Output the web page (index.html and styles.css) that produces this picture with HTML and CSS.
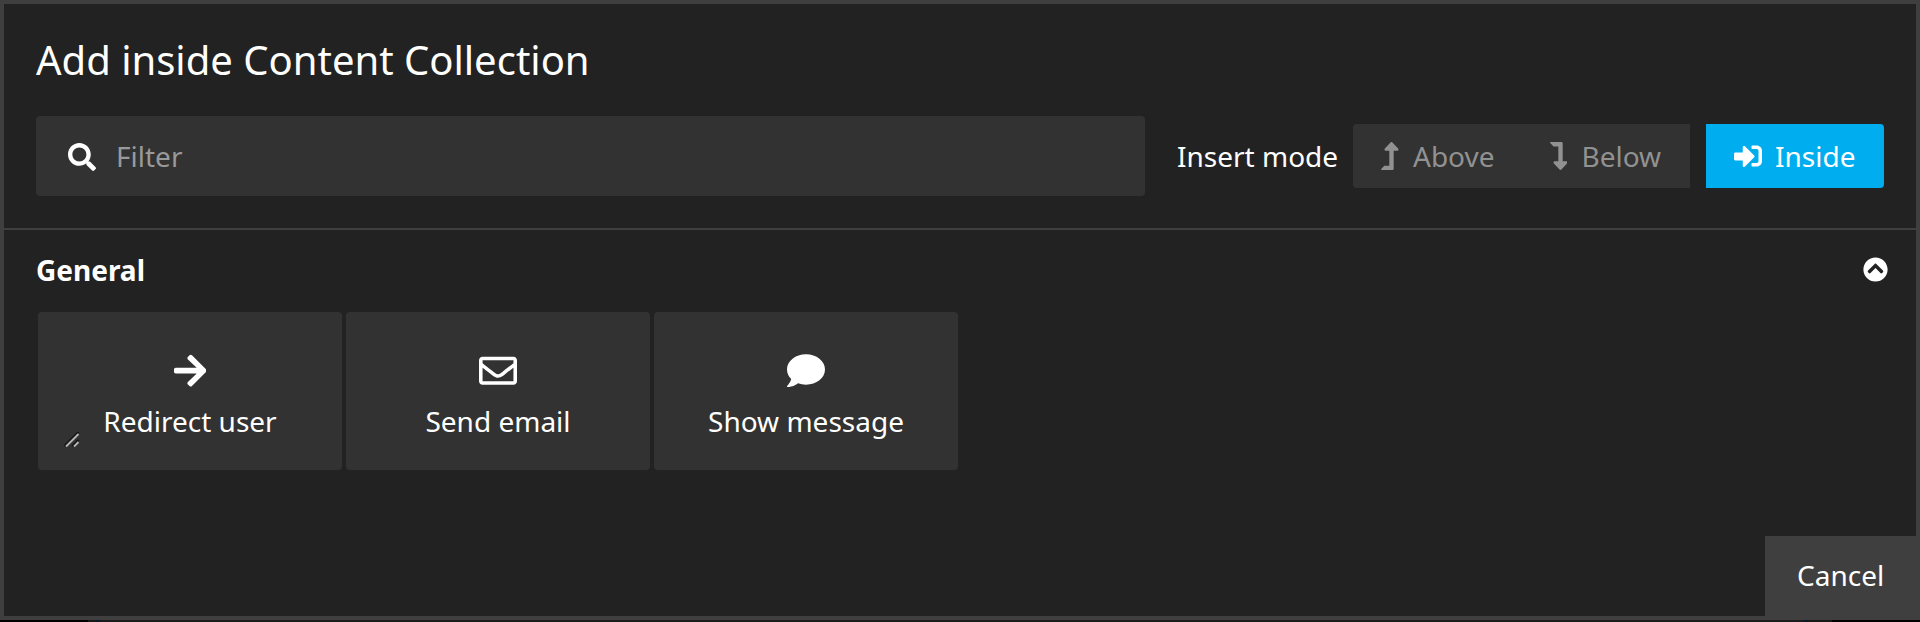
FILE: index.html
```html
<!DOCTYPE html>
<html lang="en">
<head>
<meta charset="utf-8">
<title>Add inside Content Collection</title>
<link rel="stylesheet" href="styles.css">
</head>
<body>
<main class="dialog">
  <header class="head">
    <h1 class="title">Add inside Content Collection</h1>
    <div class="tools">
      <label class="filter">
        <svg class="icon" width="28" height="28" viewBox="0 0 512 512"><path d="M505 442.700L405.300 343c-4.500-4.500-10.600-7-17-7H372c27.600-35.300 44-79.700 44-128C416 93.100 322.900 0 208 0S0 93.100 0 208s93.100 208 208 208c48.300 0 92.700-16.400 128-44v16.300c0 6.400 2.500 12.500 7 17l99.700 99.700c9.400 9.400 24.600 9.400 33.900 0l28.300-28.300c9.400-9.400 9.400-24.600.1-34zM208 336c-70.700 0-128-57.200-128-128 0-70.700 57.200-128 128-128 70.700 0 128 57.200 128 128 0 70.700-57.200 128-128 128z"/></svg>
        <input class="filter-input" type="text" placeholder="Filter">
      </label>
      <span class="mode-label">Insert mode</span>
      <div class="modes">
        <button class="mode mode-first"><svg class="icon" width="17.500" height="28" viewBox="0 0 320 512"><path d="M313.553 119.669L209.587 7.666c-9.485-10.214-25.676-10.229-35.174 0L70.438 119.669C56.232 134.969 67.062 160 88.025 160H152v272H68.024a11.996 11.996 0 0 0-8.485 3.515l-56 56C-4.021 499.074 1.333 512 12.024 512H208c13.255 0 24-10.745 24-24V160h63.966c20.878 0 31.851-24.969 17.587-40.331z"/></svg><span>Above</span></button>
        <button class="mode"><svg class="icon" width="17.500" height="28" viewBox="0 0 320 512"><path d="M313.553 392.331L209.587 504.334c-9.485 10.214-25.676 10.229-35.174 0L70.438 392.331C56.232 377.031 67.062 352 88.025 352H152V80H68.024a11.996 11.996 0 0 1-8.485-3.515l-56-56C-4.021 12.926 1.333 0 12.024 0H208c13.255 0 24 10.745 24 24v328h63.966c20.878 0 31.851 24.969 17.587 40.331z"/></svg><span>Below</span></button>
        <button class="mode mode-active"><svg class="icon" width="28" height="28" viewBox="0 0 512 512"><path d="M416 448h-84c-6.600 0-12-5.400-12-12v-40c0-6.600 5.400-12 12-12h84c17.700 0 32-14.300 32-32V160c0-17.700-14.300-32-32-32h-84c-6.600 0-12-5.400-12-12V76c0-6.600 5.400-12 12-12h84c53 0 96 43 96 96v192c0 53-43 96-96 96zm-47-201L201 79c-15-15-41-4.500-41 17v96H24c-13.300 0-24 10.700-24 24v96c0 13.300 10.700 24 24 24h136v96c0 21.500 26 32 41 17l168-168c9.300-9.400 9.300-24.600 0-34z"/></svg><span>Inside</span></button>
      </div>
    </div>
  </header>
  <section class="group">
    <div class="group-head">
      <h2 class="group-title">General</h2>
      <svg class="icon group-toggle" width="25" height="25" viewBox="0 0 512 512"><path d="M8 256C8 119 119 8 256 8s248 111 248 248-111 248-248 248S8 393 8 256zm231-113.900L103.500 277.600c-9.400 9.400-9.400 24.600 0 33.900l17 17c9.400 9.400 24.600 9.400 33.900 0L256 226.900l101.600 101.600c9.400 9.400 24.600 9.400 33.900 0l17-17c9.400-9.400 9.400-24.600 0-33.900L273 142.100c-9.400-9.400-24.600-9.400-34 0z"/></svg>
    </div>
    <div class="cards">
      <button class="card">
        <svg class="icon" width="32.670" height="37.330" viewBox="0 0 448 512"><path d="M190.500 66.900l22.200-22.200c9.400-9.400 24.600-9.400 33.900 0L441 239c9.400 9.400 9.400 24.600 0 33.900L246.600 467.300c-9.400 9.400-24.600 9.400-33.900 0l-22.200-22.200c-9.500-9.500-9.300-25 .4-34.300L311.400 296H24c-13.300 0-24-10.700-24-24v-32c0-13.300 10.700-24 24-24h287.400L190.900 101.200c-9.800-9.300-10-24.800-.4-34.300z"/></svg>
        <span>Redirect user</span>
        <svg class="grip" width="16" height="16" viewBox="0 0 16 16"><path class="grip-dark" d="M0.500 14L14.500 0M8.500 14L14.500 8"/><path class="grip-light" d="M2 14.500L14.500 2M10 14.500L14.500 10"/></svg>
      </button>
      <button class="card">
        <svg class="icon" width="38" height="37.330" viewBox="0 0 512 512" preserveAspectRatio="none"><path d="M464 64H48C21.490 64 0 85.490 0 112v288c0 26.510 21.490 48 48 48h416c26.510 0 48-21.490 48-48V112c0-26.510-21.490-48-48-48zm0 48v40.805c-22.422 18.259-58.168 46.651-134.587 106.490-16.841 13.247-50.201 45.072-73.413 44.701-23.208.375-56.579-31.459-73.413-44.701C106.180 199.465 70.425 171.067 48 152.805V112h416zM48 400V214.398c22.914 18.251 55.409 43.862 104.938 82.646 21.857 17.205 60.134 55.186 103.062 54.955 42.717.231 80.509-37.199 103.053-54.947 49.528-38.783 82.032-64.401 104.947-82.653V400H48z"/></svg>
        <span>Send email</span>
      </button>
      <button class="card">
        <svg class="icon" width="38" height="37.330" viewBox="0 0 512 512" preserveAspectRatio="none"><path d="M256 32C114.600 32 0 125.100 0 240c0 49.600 21.400 95 57 130.700C44.500 421.100 2.700 466 2.200 466.500c-2.200 2.300-2.800 5.700-1.500 8.700S4.800 480 8 480c66.300 0 116-31.800 140.600-51.400 32.700 12.300 69 19.400 107.400 19.400 141.400 0 256-93.100 256-208S397.400 32 256 32z"/></svg>
        <span>Show message</span>
      </button>
    </div>
  </section>
  <footer class="foot"><button class="cancel">Cancel</button></footer>
</main>
<div class="backdrop"></div>
</body>
</html>
```
FILE: styles.css
```css
* { box-sizing: border-box; }
body {
  margin: 0;
  height: 622px;
  overflow: hidden;
  background: #000;
  color: #fff;
  font-family: "Noto Sans", sans-serif;
  font-size: 28px;
}
button, input { font: inherit; color: inherit; border: 0; margin: 0; padding: 0; }
.icon { display: block; flex: none; fill: currentColor; }
.dialog {
  display: flex;
  flex-direction: column;
  height: 620px;
  border: 4px solid #3f3f3f;
  background: #222;
}
.head {
  height: 226px;
  padding: 32px;
  border-bottom: 2px solid #3f3f3f;
}
.title { margin: 0 0 32px; font-size: 40px; font-weight: 400; line-height: 48px; }
.tools { display: flex; align-items: center; height: 80px; }
.filter {
  display: flex;
  align-items: center;
  gap: 20px;
  width: 1109px;
  height: 80px;
  padding: 0 32px;
  border-radius: 4px;
  background: #323232;
}
.filter .icon { margin-top: 2px; }
.filter-input { flex: 1; background: none; outline: 0; line-height: 40px; }
.filter-input::placeholder { color: #999; opacity: 1; }
.mode-label { margin-left: 32px; width: 176px; white-space: nowrap; }
.modes { display: flex; }
.mode {
  display: flex;
  align-items: center;
  gap: 14.500px;
  width: 168.500px;
  height: 64px;
  padding: 0 28px;
  background: #323232;
  color: #919191;
}
.mode-first { border-radius: 4px 0 0 4px; }
.mode-active {
  gap: 13px;
  width: 178px;
  margin-left: 16px;
  border-radius: 0 4px 4px 0;
  background: #00adee;
  color: #fff;
}
.group { flex: 1; padding: 16px 28px 0 32px; }
.group-head { display: flex; align-items: center; justify-content: space-between; height: 48px; }
.group-title { margin: 0; font-size: 28px; font-weight: 700; }
.group-toggle { margin-bottom: 2px; }
.cards { display: flex; gap: 4px; margin: 18px 0 0 2px; }
.card {
  position: relative;
  display: flex;
  flex-direction: column;
  align-items: center;
  width: 304px;
  height: 158px;
  padding-top: 40px;
  border-radius: 4px;
  background: #323232;
}
.card span { margin-top: 13px; line-height: 38px; }
.grip { position: absolute; left: 26px; top: 120px; }
.grip path { fill: none; stroke-width: 2; }
.grip .grip-dark { stroke: #111; }
.grip .grip-light { stroke: #b4b4b4; }
.foot { display: flex; justify-content: flex-end; height: 80px; margin-right: -4px; }
.cancel { width: 155px; height: 80px; padding: 0 0 2px 32px; background: #3f3f3f; text-align: left; }
.backdrop {
  height: 2px;
  background: linear-gradient(90deg, #000 88px, #181818 88px 96px, #041a28 96px 100px, #1d1b1d 100px 1804px, #041a28 1804px 1808px, #181818 1808px 1832px, #000 1832px);
}
```
